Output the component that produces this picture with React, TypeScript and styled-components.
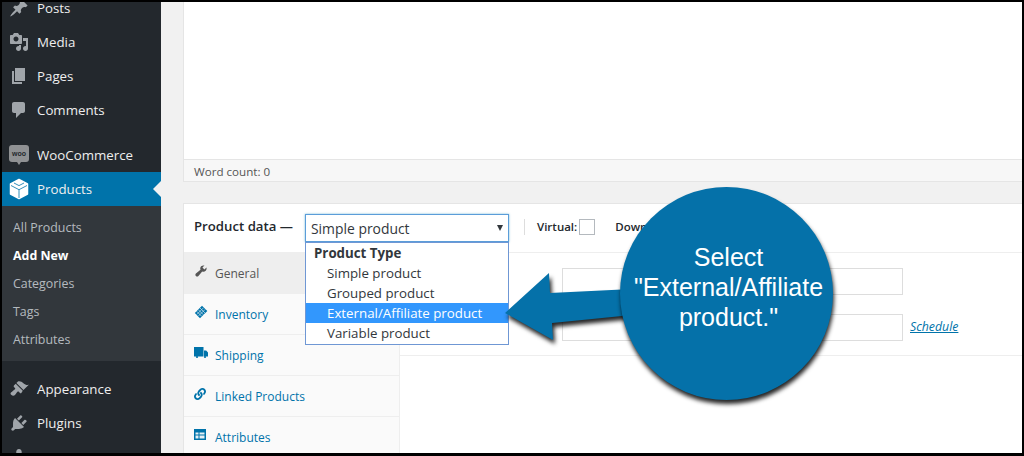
import React from "react";
import styled, { createGlobalStyle } from "styled-components";
import { FaLink } from "react-icons/fa";

const Global = createGlobalStyle`
  html, body { margin: 0; padding: 0; background: #000; }
  * { box-sizing: border-box; }
`;

const Frame = styled.div`
  position: relative;
  width: 1024px;
  height: 456px;
  border: solid #000;
  border-width: 2px 2px 3px 2px;
  display: flex;
  overflow: hidden;
  background: #f1f1f1;
  font-family: "Open Sans", "Liberation Sans", sans-serif;
`;

const Sidebar = styled.nav`
  flex: 0 0 159px;
  background: #23282d;
  margin-top: -11px;
  display: flex;
  flex-direction: column;
`;

const MenuRow = styled.div<{ $active?: boolean; $gapTop?: number }>`
  flex: 0 0 34px;
  height: 34px;
  display: flex;
  align-items: center;
  gap: 8px;
  padding-left: 7px;
  margin-top: ${(p) => p.$gapTop ?? 0}px;
  font-size: 13.3px;
  color: #eee;
  background: ${(p) => (p.$active ? "#0073aa" : "transparent")};
  position: relative;
  svg { flex: 0 0 20px; }
`;

const Notch = styled.span`
  position: absolute;
  right: 0;
  top: 9px;
  border: 8px solid transparent;
  border-left-width: 0;
  border-right-color: #f1f1f1;
`;

const SubMenu = styled.div`
  background: #32373c;
  padding: 8px 0 7px;
  height: 155px;
  display: flex;
  flex-direction: column;
`;

const SubItem = styled.div<{ $current?: boolean }>`
  height: 28px;
  line-height: 28px;
  padding-left: 11px;
  font-size: 12.4px;
  font-weight: ${(p) => (p.$current ? 700 : 400)};
  color: ${(p) => (p.$current ? "#fff" : "rgba(240,245,250,.7)")};
`;

const WooBadge = styled.span`
  width: 20px;
  height: 17px;
  margin-top: -4px;
  background: #8f9193;
  border-radius: 3px;
  color: #23282d;
  font: 700 7px "Liberation Sans", sans-serif;
  display: flex;
  align-items: center;
  justify-content: center;
  position: relative;
  flex: 0 0 20px;
  &::after {
    content: "";
    position: absolute;
    left: 8px;
    bottom: -3px;
    border: 2px solid transparent;
    border-top: 3px solid #8f9193;
    border-bottom-width: 0;
  }
`;

const Main = styled.main`
  flex: 1;
  min-width: 0;
  padding-left: 22px;
  display: flex;
  flex-direction: column;
`;

const Editor = styled.section`
  height: 180px;
  flex: 0 0 180px;
  background: #fff;
  border-left: 1px solid #e5e5e5;
  display: flex;
  flex-direction: column;
`;

const EditorBody = styled.div`
  flex: 1;
`;

const StatusBar = styled.div`
  height: 23px;
  background: #f7f7f7;
  border-top: 1px solid #e5e5e5;
  border-bottom: 1px solid #e5e5e5;
  font-size: 11.6px;
  color: #555;
  line-height: 24px;
  padding-left: 10px;
`;

const Panel = styled.section`
  margin-top: 21px;
  flex: 1;
  min-height: 0;
  background: #fff;
  border-top: 1px solid #e5e5e5;
  border-left: 1px solid #e5e5e5;
  display: flex;
  flex-direction: column;
`;

const PanelHead = styled.header`
  flex: 0 0 49px;
  height: 49px;
  border-bottom: 1px solid #eee;
  display: flex;
  align-items: center;
  padding-left: 10px;
  position: relative;
`;

const HeadLabel = styled.span`
  width: 111px;
  font-size: 13.2px;
  font-weight: 600;
  color: #23282d;
  margin-top: -5px;
`;

const SelectBox = styled.div`
  width: 204px;
  height: 28px;
  border: 1px solid #5b9dd9;
  box-shadow: 0 0 2px rgba(30, 140, 190, 0.6);
  font-size: 13.9px;
  color: #32373c;
  display: flex;
  align-items: center;
  justify-content: space-between;
  padding: 1px 6px 0 5px;
  background: #fff;
`;

const Caret = styled.span`
  border: 3.5px solid transparent;
  border-top: 6px solid #32373c;
  border-bottom-width: 0;
  margin-right: -1px;
  margin-top: -2px;
`;

const Divider = styled.span`
  width: 1px;
  height: 16px;
  background: #ddd;
  margin: -2px 12px 0 15px;
`;

const HeadCheck = styled.label`
  display: flex;
  align-items: center;
  gap: 2px;
  font-size: 11.5px;
  font-weight: 600;
  color: #23282d;
  margin-top: -3px;
  margin-right: 20px;
`;

const Box = styled.span`
  width: 16px;
  height: 16px;
  border: 1px solid #b4b9be;
  background: #fff;
`;

const Dropdown = styled.div`
  position: absolute;
  left: 121px;
  top: 38px;
  width: 204px;
  height: 103px;
  background: #fff;
  border: 1px solid #6f97d4;
  z-index: 3;
  font-size: 13.3px;
  color: #32373c;
`;

const OptGroup = styled.div`
  height: 20px;
  line-height: 20px;
  padding-left: 8px;
  font-weight: 700;
`;

const Opt = styled.div<{ $selected?: boolean }>`
  height: 20px;
  line-height: 20px;
  padding-left: 21px;
  background: ${(p) => (p.$selected ? "#3297fd" : "transparent")};
  color: ${(p) => (p.$selected ? "#fff" : "#32373c")};
`;

const PanelBody = styled.div`
  flex: 1;
  min-height: 0;
  display: flex;
`;

const Tabs = styled.aside`
  flex: 0 0 216px;
  background: #fafafa;
  border-right: 1px solid #eee;
  display: flex;
  flex-direction: column;
`;

const Tab = styled.div<{ $active?: boolean }>`
  flex: 0 0 41px;
  height: 41px;
  display: flex;
  align-items: center;
  padding-left: 10px;
  font-size: 12px;
  color: ${(p) => (p.$active ? "#555" : "#0073aa")};
  background: ${(p) => (p.$active ? "#eee" : "transparent")};
  border-bottom: 1px solid #eee;
`;

const TabIcon = styled.span`
  flex: 0 0 21px;
  display: flex;
  margin-top: -4px;
`;

const Fields = styled.div`
  flex: 1;
  min-width: 0;
`;

const FieldGroup = styled.div`
  height: 103px;
  border-bottom: 1px solid #eee;
  padding: 15px 0 0 162px;
  display: flex;
  flex-direction: column;
  gap: 19px;
`;

const FieldRow = styled.div`
  display: flex;
  align-items: center;
  gap: 7px;
`;

const Input = styled.span`
  width: 341px;
  height: 27px;
  background: #fff;
  border: 1px solid #ddd;
`;

const Schedule = styled.a`
  font-size: 12.3px;
  font-style: italic;
  color: #0073aa;
  text-decoration: underline;
  margin-top: -2px;
`;

const Callout = styled.div`
  position: absolute;
  left: 501px;
  top: 182px;
  width: 340px;
  height: 225px;
  z-index: 5;
`;

const ArrowArt = styled.svg`
  position: absolute;
  left: 0;
  top: 0;
  filter: drop-shadow(2px 4px 2px rgba(0, 0, 0, 0.85));
`;

const Bubble = styled.div`
  position: absolute;
  left: 117px;
  top: 3px;
  width: 213px;
  height: 213px;
  border-radius: 50%;
  background: #0571a9;
  box-shadow: 1px 4px 4px rgba(0, 0, 0, 0.85);
  color: #fff;
  font: 25px/30px "Liberation Sans", Arial, sans-serif;
  text-align: center;
  padding: 55px 0 0 4px;
  white-space: nowrap;
`;

const I = ({ d, size = 20, fill = "#a0a5aa" }: { d: string; size?: number; fill?: string }) => (
  <svg width={size} height={size} viewBox="0 0 20 20" fill={fill}>
    <path d={d} />
  </svg>
);

const ICONS = {
  posts: "M10.44 3.02l1.82-1.82 6.36 6.35-1.83 1.82c-1.05-.68-2.48-.57-3.41.36l-.75.75c-.92.93-1.04 2.35-.35 3.41l-1.83 1.82-2.41-2.41-2.8 2.79c-.42.42-3.38 2.71-3.8 2.29s1.86-3.39 2.28-3.81l2.79-2.79L4.1 9.36l1.83-1.82c1.05.69 2.48.57 3.4-.36l.75-.75c.93-.92 1.05-2.35.36-3.41z",
  media: "M13 11V4c0-.55-.45-1-1-1h-1.67L9 1H5L3.67 3H2c-.55 0-1 .45-1 1v7c0 .55.45 1 1 1h10c.55 0 1-.45 1-1zM7 4.5c1.38 0 2.5 1.12 2.5 2.5S8.38 9.5 7 9.5 4.5 8.38 4.5 7 5.62 4.5 7 4.5zM14 6h5v10.5c0 1.38-1.12 2.5-2.5 2.5S14 17.88 14 16.5s1.12-2.5 2.5-2.5c.17 0 .34.02.5.05V9h-3V6zm-4 8.05V13h2v3.5c0 1.38-1.12 2.5-2.5 2.5S7 17.88 7 16.5 8.12 14 9.5 14c.17 0 .34.02.5.05z",
  pages: "M6 15V2h10v13H6zm-1 1h8v2H3V5h2v11z",
  comments: "M5 2h9c1.1 0 2 .9 2 2v7c0 1.1-.9 2-2 2h-2l-5 5v-5H5c-1.1 0-2-.9-2-2V4c0-1.1.9-2 2-2z",
  appearance: "M14.48 11.06L7.41 3.99l1.5-1.5c.5-.56 2.3-.47 3.51.32 1.21.8 1.43 1.28 2.91 2.1 1.18.64 2.45 1.26 4.45.85zm-.71.71L6.7 4.7 4.93 6.47c-.39.39-.39 1.02 0 1.41l1.06 1.06c.39.39.39 1.03 0 1.42-.6.6-1.43 1.11-2.21 1.69-.35.26-.7.53-1.01.84C1.43 13.23.91 14.65 2.5 16.06c1.12 1.12 2.84.57 3.43-.02.31-.31.58-.65.84-1 .58-.78 1.09-1.61 1.69-2.21.39-.39 1.03-.39 1.42 0l1.06 1.06c.39.39 1.02.39 1.41 0z",
  plugins: "M13.11 4.36L9.87 7.6 8 5.73l3.24-3.24c.35-.34 1.05-.2 1.56.32.52.51.66 1.21.31 1.55zm-8 1.77l.91-1.12 9.01 9.01-1.19.84c-.71.71-2.63 1.16-3.82 1.16H6.14L4.9 17.26c-.59.59-1.54.59-2.12 0-.59-.58-.59-1.53 0-2.12l1.24-1.24v-3.88c0-1.13.4-3.19 1.09-3.89zm7.26 3.97l3.24-3.24c.34-.35 1.04-.21 1.55.31.52.51.66 1.21.32 1.55l-3.24 3.25z",
  users: "M10 9.25c-2.27 0-2.73-3.44-2.73-3.44C7 4.02 7.82 2 9.97 2c2.16 0 2.98 2.02 2.71 3.81 0 0-.41 3.44-2.68 3.44zm0 2.57L12.72 10c2.39 0 4.52 2.33 4.52 4.53v2.49s-3.65 1.13-7.24 1.13c-3.65 0-7.24-1.13-7.24-1.13v-2.49c0-2.25 1.94-4.48 4.47-4.48z",
  wrench: "M16.68 9.77c-1.34 1.34-3.3 1.67-4.95.99l-5.41 6.52c-.99.99-2.59.99-3.58 0s-.99-2.59 0-3.58l6.52-5.41c-.68-1.65-.35-3.61.99-4.95 1.28-1.28 3.12-1.62 4.72-1.06l-2.89 2.89 2.82 2.82 2.86-2.87c.53 1.58.18 3.39-1.08 4.65z",
};

const CubeIcon = () => (
  <svg width="20" height="22" viewBox="0 0 20 22">
    <path d="M10 1.500l8.500 4.500v10L10 20.500 1.500 16V6z" fill="#fff" stroke="#fff" strokeWidth="1.500" strokeLinejoin="round" />
    <path d="M2 7.500l8 4.200 8-4.200M10 11.700V20M5 5l5 2.600L15 5" stroke="#0073aa" strokeWidth=".8" fill="none" />
  </svg>
);

const InventoryIcon = () => (
  <svg width="14" height="14" viewBox="0 0 14 14">
    <path d="M8 .8L13.300 6 6 13.300.8 8z" fill="#0073aa" />
    <path d="M6 3l5 5M4.300 4.700l5 5M2.700 6.300l5 5M9.500 2.800L2.800 9.500M11 4.500L4.500 11" stroke="#d5e7f1" strokeWidth=".7" />
  </svg>
);

const TruckIcon = () => (
  <svg width="14" height="12" viewBox="0 0 14 12">
    <path d="M0 0h9.500v9.500H0zM10 3.500h2.200L14 5.500v4h-4z" fill="#0073aa" />
    <circle cx="3" cy="10" r="1.100" fill="#0073aa" />
    <circle cx="11" cy="10" r="1.100" fill="#0073aa" />
  </svg>
);

const AttributesIcon = () => (
  <svg width="12" height="12" viewBox="0 0 12 12">
    <path d="M0 0h12v11H0z" fill="#0073aa" />
    <path d="M1.500 3.500h3v2h-3zM1.500 6.500h3v3h-3zM5.500 3.500h5v2h-5zM5.500 6.500h5v3h-5z" fill="#e6f1f6" />
  </svg>
);

export default function App() {
  return (
    <Frame>
      <Global />
      <Sidebar>
        <MenuRow><I d={ICONS.posts} />Posts</MenuRow>
        <MenuRow><I d={ICONS.media} />Media</MenuRow>
        <MenuRow><I d={ICONS.pages} />Pages</MenuRow>
        <MenuRow><I d={ICONS.comments} />Comments</MenuRow>
        <MenuRow $gapTop={11}><WooBadge>woo</WooBadge>WooCommerce</MenuRow>
        <MenuRow $active><CubeIcon />Products<Notch /></MenuRow>
        <SubMenu>
          <SubItem>All Products</SubItem>
          <SubItem $current>Add New</SubItem>
          <SubItem>Categories</SubItem>
          <SubItem>Tags</SubItem>
          <SubItem>Attributes</SubItem>
        </SubMenu>
        <MenuRow $gapTop={11}><I d={ICONS.appearance} />Appearance</MenuRow>
        <MenuRow><I d={ICONS.plugins} />Plugins</MenuRow>
        <MenuRow><I d={ICONS.users} />Users</MenuRow>
      </Sidebar>
      <Main>
        <Editor>
          <EditorBody />
          <StatusBar>Word count: 0</StatusBar>
        </Editor>
        <Panel>
          <PanelHead>
            <HeadLabel>Product data —</HeadLabel>
            <SelectBox>Simple product<Caret /></SelectBox>
            <Divider />
            <HeadCheck>Virtual: <Box /></HeadCheck>
            <HeadCheck>Downloadable: <Box /></HeadCheck>
            <Dropdown>
              <OptGroup>Product Type</OptGroup>
              <Opt>Simple product</Opt>
              <Opt>Grouped product</Opt>
              <Opt $selected>External/Affiliate product</Opt>
              <Opt>Variable product</Opt>
            </Dropdown>
          </PanelHead>
          <PanelBody>
            <Tabs>
              <Tab $active><TabIcon><I d={ICONS.wrench} size={14} fill="#555" /></TabIcon>General</Tab>
              <Tab><TabIcon><InventoryIcon /></TabIcon>Inventory</Tab>
              <Tab><TabIcon><TruckIcon /></TabIcon>Shipping</Tab>
              <Tab><TabIcon><FaLink size={12} color="#0073aa" /></TabIcon>Linked Products</Tab>
              <Tab><TabIcon><AttributesIcon /></TabIcon>Attributes</Tab>
            </Tabs>
            <Fields>
              <FieldGroup>
                <FieldRow><Input /></FieldRow>
                <FieldRow><Input /><Schedule>Schedule</Schedule></FieldRow>
              </FieldGroup>
            </Fields>
          </PanelBody>
        </Panel>
      </Main>
      <Callout>
        <ArrowArt width="340" height="225" viewBox="0 0 340 225">
          <path d="M2 129L46 89L47 109L129 105V131L49 139L50 156z" fill="#0571a9" />
        </ArrowArt>
        <Bubble>Select<br />"External/Affiliate<br />product."</Bubble>
      </Callout>
    </Frame>
  );
}
